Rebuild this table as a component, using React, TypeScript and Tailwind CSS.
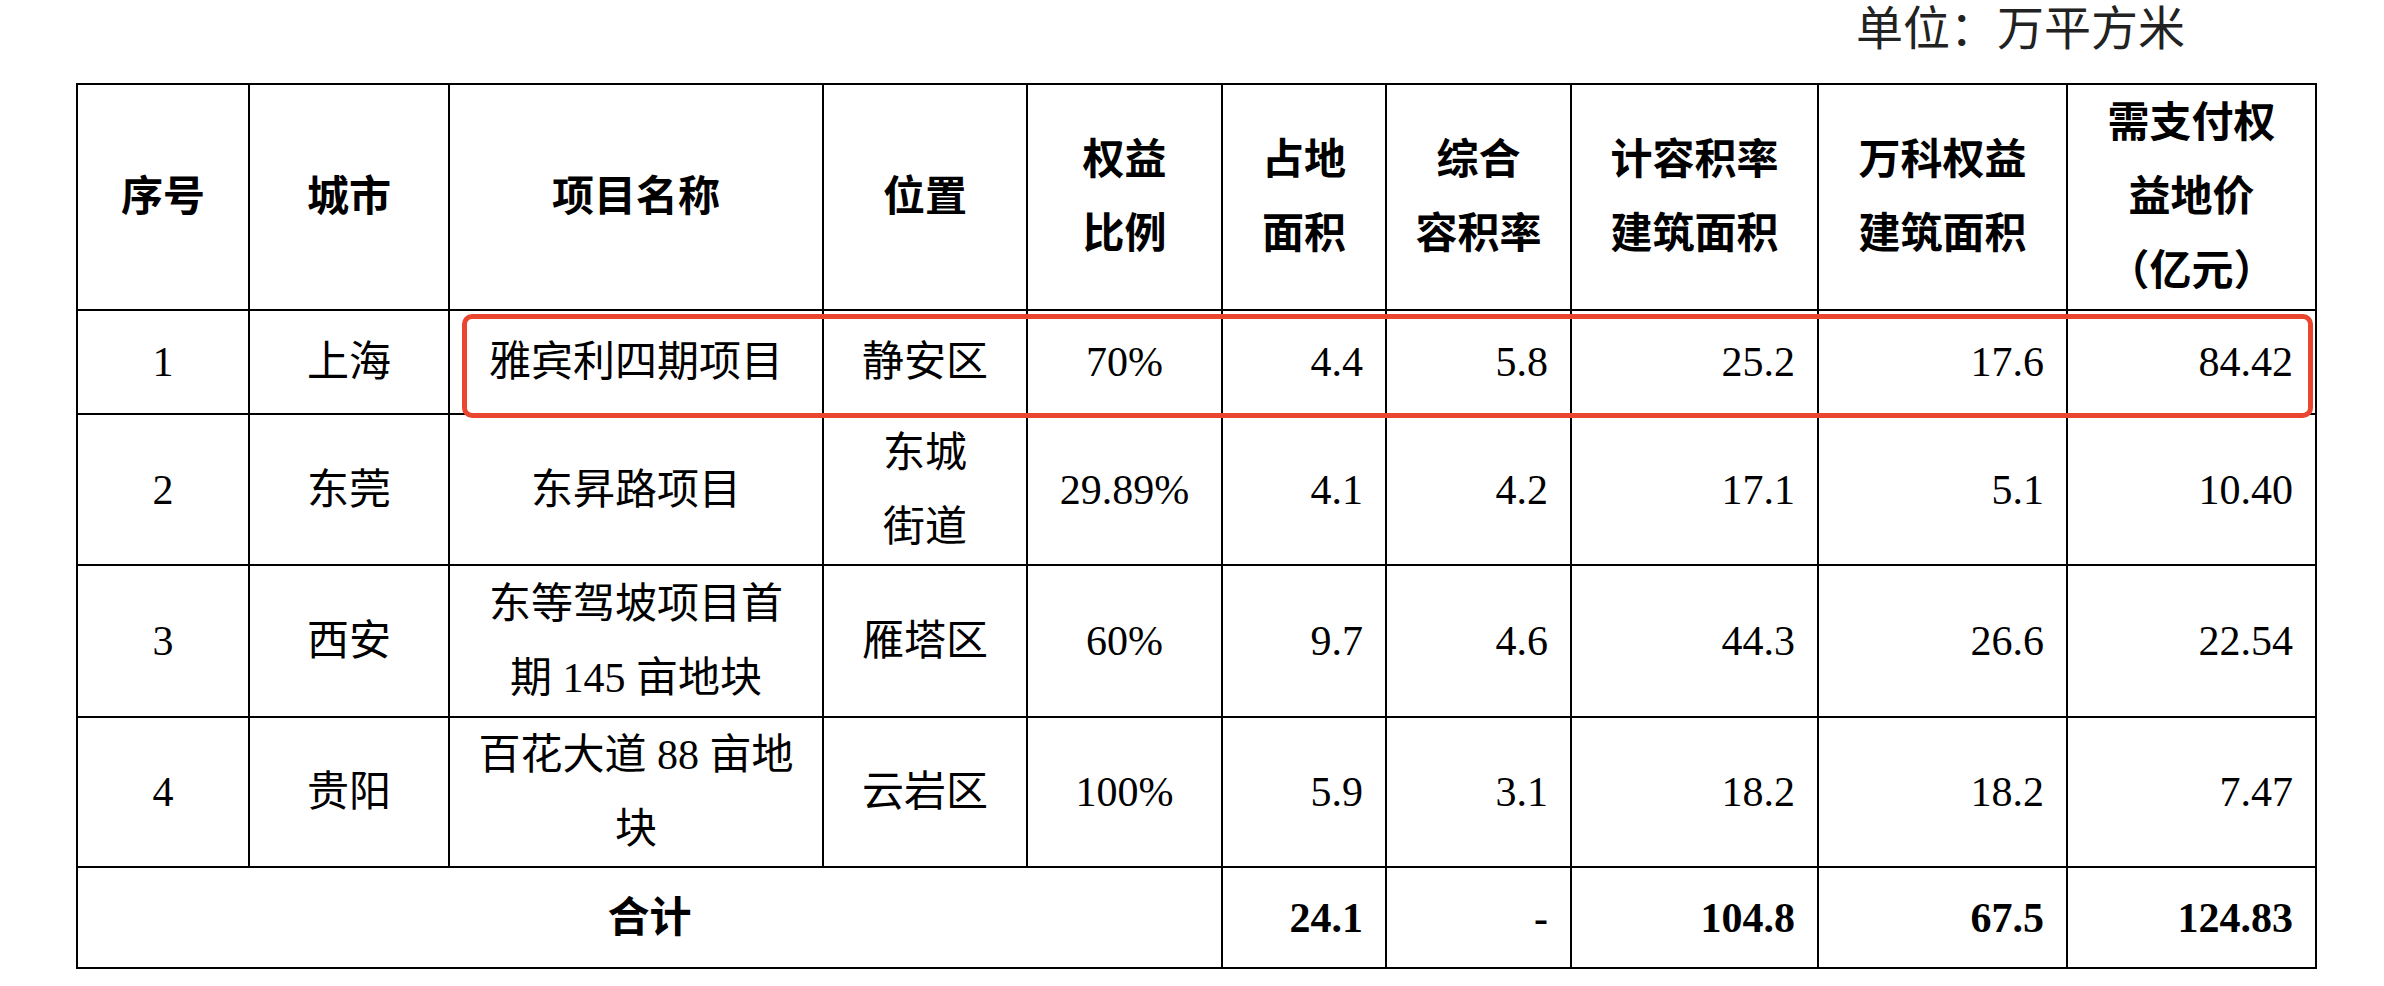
const FONT = "font-['Liberation_Serif','Noto_Sans_CJK_SC',serif]";

type Row = {
  no: string;
  city: string;
  name: React.ReactNode;
  place: React.ReactNode;
  share: string;
  area: string;
  far: string;
  gfa: string;
  vankeGfa: string;
  price: string;
  h: string;
};

const rows: Row[] = [
  { no: '1', city: '上海', name: '雅宾利四期项目', place: '静安区', share: '70%', area: '4.4', far: '5.8', gfa: '25.2', vankeGfa: '17.6', price: '84.42', h: 'h-[104px]' },
  {
    no: '2', city: '东莞', name: '东昇路项目',
    place: (<>东城<br />街道</>),
    share: '29.89%', area: '4.1', far: '4.2', gfa: '17.1', vankeGfa: '5.1', price: '10.40', h: 'h-[151px]',
  },
  {
    no: '3', city: '西安',
    name: (<>东等驾坡项目首<br />期 145 亩地块</>),
    place: '雁塔区', share: '60%', area: '9.7', far: '4.6', gfa: '44.3', vankeGfa: '26.6', price: '22.54', h: 'h-[152px]',
  },
  {
    no: '4', city: '贵阳',
    name: (<>百花大道 88 亩地<br />块</>),
    place: '云岩区', share: '100%', area: '5.9', far: '3.1', gfa: '18.2', vankeGfa: '18.2', price: '7.47', h: 'h-[150px]',
  },
];

const cell = 'border-2 border-black align-middle';
const center = `${cell} text-center`;
const num = `${cell} text-right pr-[22px]`;

export default function App() {
  return (
    <div className={`min-h-screen w-[2384px] bg-white text-black ${FONT} text-[42px] leading-[74px]`}>
      <div className="flex justify-end pr-[199px] text-[47px] leading-[58px] text-[#222]">单位：万平方米</div>

      <div className="relative ml-[76px] mt-[25px] w-[2240px]">
        <table className="w-[2240px] table-fixed border-collapse border-2 border-black">
          <colgroup>
            <col className="w-[172px]" />
            <col className="w-[200px]" />
            <col className="w-[374px]" />
            <col className="w-[204px]" />
            <col className="w-[195px]" />
            <col className="w-[164px]" />
            <col className="w-[185px]" />
            <col className="w-[247px]" />
            <col className="w-[249px]" />
            <col className="w-[249px]" />
          </colgroup>
          <thead>
            <tr className="h-[226px] font-bold">
              <th className={center}>序号</th>
              <th className={center}>城市</th>
              <th className={center}>项目名称</th>
              <th className={center}>位置</th>
              <th className={center}>权益<br />比例</th>
              <th className={center}>占地<br />面积</th>
              <th className={center}>综合<br />容积率</th>
              <th className={center}>计容积率<br />建筑面积</th>
              <th className={center}>万科权益<br />建筑面积</th>
              <th className={center}>需支付权<br />益地价<br />（亿元）</th>
            </tr>
          </thead>
          <tbody>
            {rows.map((r) => (
              <tr key={r.no} className={r.h}>
                <td className={center}>{r.no}</td>
                <td className={center}>{r.city}</td>
                <td className={center}>{r.name}</td>
                <td className={center}>{r.place}</td>
                <td className={center}>{r.share}</td>
                <td className={num}>{r.area}</td>
                <td className={num}>{r.far}</td>
                <td className={num}>{r.gfa}</td>
                <td className={num}>{r.vankeGfa}</td>
                <td className={num}>{r.price}</td>
              </tr>
            ))}
            <tr className="h-[101px] font-bold">
              <td colSpan={5} className={center}>合计</td>
              <td className={num}>24.1</td>
              <td className={num}>-</td>
              <td className={num}>104.8</td>
              <td className={num}>67.5</td>
              <td className={num}>124.83</td>
            </tr>
          </tbody>
        </table>

        {/* highlight annotation over row 1 */}
        <div className="pointer-events-none absolute left-[386px] top-[231px] h-[104px] w-[1851px] rounded-[10px] border-[5px] border-[#e9452f]" />
      </div>
    </div>
  );
}
